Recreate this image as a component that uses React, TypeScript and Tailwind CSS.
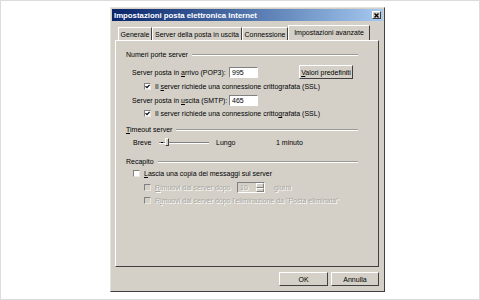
import React from 'react'

const font = { fontFamily: 'Tahoma, "Liberation Sans", Arial, sans-serif' }

function Check({ checked, disabled }: { checked?: boolean; disabled?: boolean }) {
  return (
    <span
      className={`inline-flex h-[7px] w-[7px] shrink-0 items-center justify-center border border-t-[#808080] border-l-[#808080] border-r-[#e8e6e0] border-b-[#e8e6e0] ${
        disabled ? 'bg-[#d4d0c8]' : 'bg-white'
      }`}
    >
      {checked && (
        <svg width="5" height="5" viewBox="0 0 5 5">
          <path d="M0.5 2.2 L2 3.7 L4.6 0.8" stroke="#000" strokeWidth="1.2" fill="none" />
        </svg>
      )}
    </span>
  )
}

function Group({ title }: { title: React.ReactNode }) {
  return (
    <div className="flex items-center gap-[4px]">
      <span>{title}</span>
      <div className="flex-1 border-t border-t-[#9c9a94] border-b border-b-white" />
    </div>
  )
}

function Field({ value }: { value: string }) {
  return (
    <div className="flex h-[11px] w-[29px] items-center border border-t-[#808080] border-l-[#808080] border-r-white border-b-white bg-white pl-[2px]">
      {value}
    </div>
  )
}

function Btn({ children, w }: { children: React.ReactNode; w: string }) {
  return (
    <div
      className={`flex h-[14px] ${w} items-center justify-center border border-t-white border-l-white border-r-[#404040] border-b-[#404040] bg-[#d4d0c8]`}
    >
      {children}
    </div>
  )
}

export default function App() {
  const tabs = [
    { label: 'Generale', w: 'w-[34px]' },
    { label: 'Server della posta in uscita', w: 'w-[90px]' },
    { label: 'Connessione', w: 'w-[46px]' },
  ]
  return (
    <div
      className="h-[300px] w-[480px] border border-[#dcdcdc] bg-white pl-[109px] pt-[6px] text-[7px] leading-[9px] text-black"
      style={font}
    >
      <div className="flex h-[285px] w-[275px] flex-col border border-t-[#e4e2dc] border-l-[#e4e2dc] border-r-[#404040] border-b-[#404040] bg-[#d4d0c8] p-[1px]">
        {/* title bar */}
        <div className="flex h-[12px] items-center justify-between bg-gradient-to-r from-[#0a246a] to-[#a6caf0] pl-[2px] pr-[2px]">
          <span className="text-[7.8px] font-bold text-white">Impostazioni posta elettronica Internet</span>
          <div className="flex h-[8px] w-[9px] items-center justify-center border border-t-white border-l-white border-r-[#404040] border-b-[#404040] bg-[#d4d0c8]">
            <svg width="5" height="5" viewBox="0 0 5 5">
              <path d="M0.5 0.5 L4.5 4.5 M4.5 0.5 L0.5 4.5" stroke="#000" strokeWidth="1.3" />
            </svg>
          </div>
        </div>

        {/* tabs */}
        <div className="mt-[4px] flex items-end pl-[6px]">
          {tabs.map((t) => (
            <div
              key={t.label}
              className={`flex h-[13px] ${t.w} items-center justify-center whitespace-nowrap border-t border-l border-r border-t-white border-l-white border-r-[#404040]`}
            >
              {t.label}
            </div>
          ))}
          <div className="-mb-[1px] flex h-[16px] w-[82px] items-start justify-center whitespace-nowrap border-t border-l border-r border-t-white border-l-white border-r-[#404040] bg-[#d4d0c8] pt-[2px]">
            Impostazioni avanzate
          </div>
        </div>

        {/* panel */}
        <div className="ml-[3px] mr-[4px] flex h-[227px] flex-col border border-t-white border-l-white border-r-[#404040] border-b-[#404040] pl-[10px] pr-[20px] pt-[9px]">
          <Group title="Numeri porte server" />
          <div className="mt-[6px] flex items-center pl-[6px]">
            <span className="w-[97px]">Server posta in <u>a</u>rrivo (POP3):</span>
            <Field value="995" />
            <div className="ml-auto mr-[5px]">
              <Btn w="w-[54px]">
                <span><u>V</u>alori predefiniti</span>
              </Btn>
            </div>
          </div>
          <div className="mt-[3px] flex items-center gap-[4px] pl-[18px]">
            <Check checked />
            <span>Il <u>s</u>erver richiede una connessione crittografata (SSL)</span>
          </div>
          <div className="mt-[4px] flex items-center pl-[6px]">
            <span className="w-[97px]">Server posta in <u>u</u>scita (SMTP):</span>
            <Field value="465" />
          </div>
          <div className="mt-[3px] flex items-center gap-[4px] pl-[18px]">
            <Check checked />
            <span>Il server richiede una connessione critto<u>g</u>rafata (SSL)</span>
          </div>

          <div className="mt-[7px]">
            <Group title={<><u>T</u>imeout server</>} />
          </div>
          <div className="mt-[4px] flex items-center pl-[7px]">
            <span className="w-[26px]">Breve</span>
            <div className="relative flex h-[9px] w-[50px] items-center">
              <div className="h-[2px] w-full border-t border-t-[#808080] border-b border-b-white" />
              <div className="absolute left-[6px] top-0 h-[8px] w-[4px] border border-t-white border-l-white border-r-[#404040] border-b-[#404040] bg-[#d4d0c8]" />
              <div className="absolute left-[2px] top-[4px] h-[1px] w-[2px] bg-black" />
            </div>
            <span className="ml-[7px] w-[60px]">Lungo</span>
            <span>1 minuto</span>
          </div>

          <div className="mt-[10px]">
            <Group title="Recapito" />
          </div>
          <div className="mt-[3px] flex items-center gap-[4px] pl-[7px]">
            <Check />
            <span><u>L</u>ascia una copia dei messaggi sul server</span>
          </div>
          <div className="mt-[4px] flex items-center gap-[4px] pl-[18px] text-[#a8a69f] [text-shadow:1px_1px_0_#fff]">
            <Check disabled />
            <span className="w-[78px]"><u>R</u>imuovi dal server dopo</span>
            <div className="flex h-[11px] w-[28px] items-center border border-t-[#808080] border-l-[#808080] border-r-white border-b-white bg-[#d4d0c8]">
              <span className="flex-1 pl-[2px]">10</span>
              <div className="flex h-full w-[8px] flex-col">
                <div className="flex-1 border border-t-white border-l-white border-r-[#808080] border-b-[#808080]" />
                <div className="flex-1 border border-t-white border-l-white border-r-[#808080] border-b-[#808080]" />
              </div>
            </div>
            <span className="ml-[5px]">giorni</span>
          </div>
          <div className="mt-[3px] flex items-center gap-[4px] pl-[18px] text-[#a8a69f] [text-shadow:1px_1px_0_#fff]">
            <Check disabled />
            <span>R<u>i</u>muovi dal server dopo l'eliminazione da "Posta eliminata"</span>
          </div>
        </div>

        {/* buttons */}
        <div className="mt-[5px] flex justify-end gap-[3px] pr-[4px]">
          <Btn w="w-[49px]">OK</Btn>
          <Btn w="w-[48px]">Annulla</Btn>
        </div>
      </div>
    </div>
  )
}
